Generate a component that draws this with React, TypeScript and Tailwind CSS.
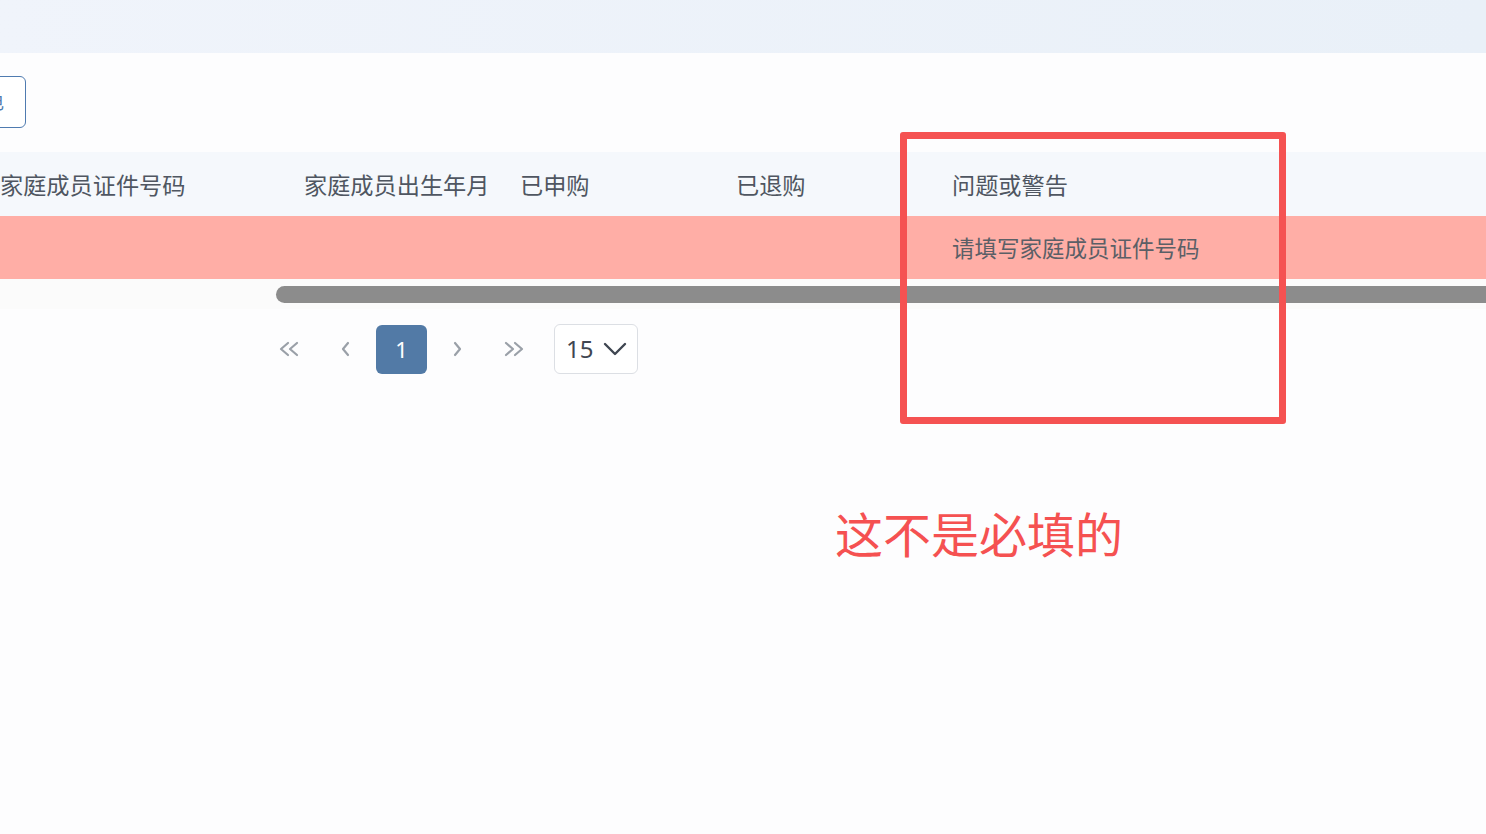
import React from 'react';

const font = { fontFamily: '"Noto Sans", "Noto Sans CJK SC", sans-serif' };

const columns = [
    { label: '家庭成员证件号码', width: 'w-[304px]' },
    { label: '家庭成员出生年月', width: 'w-[216px]' },
    { label: '已申购', width: 'w-[216px]' },
    { label: '已退购', width: 'w-[216px]' },
    { label: '问题或警告', width: 'flex-1' },
];

const Chevron = ({ dir, double }: { dir: 'left' | 'right'; double?: boolean }) => {
    const single = dir === 'left' ? 'M9 3 L4 9 L9 15' : 'M4 3 L9 9 L4 15';
    return (
        <svg width={double ? 24 : 13} height="18" viewBox={double ? '0 0 24 18' : '0 0 13 18'} fill="none" stroke="#9aa0a8" strokeWidth="2.2" strokeLinecap="round" strokeLinejoin="round">
            {double ? (
                dir === 'left' ? (
                    <>
                        <path d="M10 3 L3 9 L10 15" />
                        <path d="M19 3 L12 9 L19 15" />
                    </>
                ) : (
                    <>
                        <path d="M4 3 L11 9 L4 15" />
                        <path d="M13 3 L20 9 L13 15" />
                    </>
                )
            ) : (
                <path d={single} />
            )}
        </svg>
    );
};

const App = () => {
    return (
        <div className="relative w-full h-[834px] overflow-hidden bg-[#fdfdfe]" style={font}>
            {/* top bar */}
            <div className="h-[53px] bg-gradient-to-r from-[#f0f4fb] to-[#e9f0f8]"></div>

            {/* toolbar */}
            <div className="pt-[23px] pb-[24px] flex">
                <button className="ml-[-80px] w-[106px] h-[52px] border border-[#4f7bb0] rounded-md bg-white text-[#4f7bb0] text-[18px] flex items-center justify-end pr-[21px]">
                    查电
                </button>
            </div>

            {/* table */}
            <div>
                <div className="h-[64px] pt-[3px] bg-[#f5f8fc] flex items-center text-[23.2px] text-[#4f5661]">
                    {columns.map((c) => (
                        <div key={c.label} className={`${c.width} whitespace-nowrap`}>{c.label}</div>
                    ))}
                </div>
                <div className="h-[63px] pt-[3px] bg-[#ffaea6] flex items-center text-[22.5px] text-[#5b5f66]">
                    <div className="w-[304px]"></div>
                    <div className="w-[216px]"></div>
                    <div className="w-[216px]"></div>
                    <div className="w-[216px]"></div>
                    <div className="flex-1 whitespace-nowrap">请填写家庭成员证件号码</div>
                </div>
                <div className="h-[30px] bg-[#fbfbfb] pt-[7px]">
                    <div className="ml-[276px] h-[17px] bg-[#8c8c8c] rounded-l-full"></div>
                </div>
            </div>

            {/* pagination */}
            <div className="mt-[15px] pl-[264px] flex items-center gap-[5px]">
                <div className="w-[51px] h-[49px] flex items-center justify-center"><Chevron dir="left" double /></div>
                <div className="w-[51px] h-[49px] flex items-center justify-center"><Chevron dir="left" /></div>
                <div className="w-[51px] h-[49px] rounded-md bg-[#527aa6] text-white text-[22px] flex items-center justify-center">1</div>
                <div className="w-[51px] h-[49px] flex items-center justify-center"><Chevron dir="right" /></div>
                <div className="w-[51px] h-[49px] flex items-center justify-center"><Chevron dir="right" double /></div>
                <div className="ml-[10px] w-[84px] h-[50px] border border-[#dcdfe4] rounded-md bg-white flex items-center pl-[11px] gap-[10px] text-[24px] text-[#3f4651]">
                    <span>15</span>
                    <svg width="24" height="14" viewBox="0 0 24 14" fill="none" stroke="#3f4651" strokeWidth="2.4" strokeLinecap="round" strokeLinejoin="round">
                        <path d="M2 2 L12 12 L22 2" />
                    </svg>
                </div>
            </div>

            {/* annotation */}
            <div className="absolute left-[900px] top-[132px] w-[386px] h-[292px] border-[7px] border-[#f55252] rounded-[3px]"></div>
            <div className="absolute left-[835px] top-[500px] text-[48px] leading-[70px] text-[#f55151] whitespace-nowrap">这不是必填的</div>
        </div>
    );
};

export default App;
